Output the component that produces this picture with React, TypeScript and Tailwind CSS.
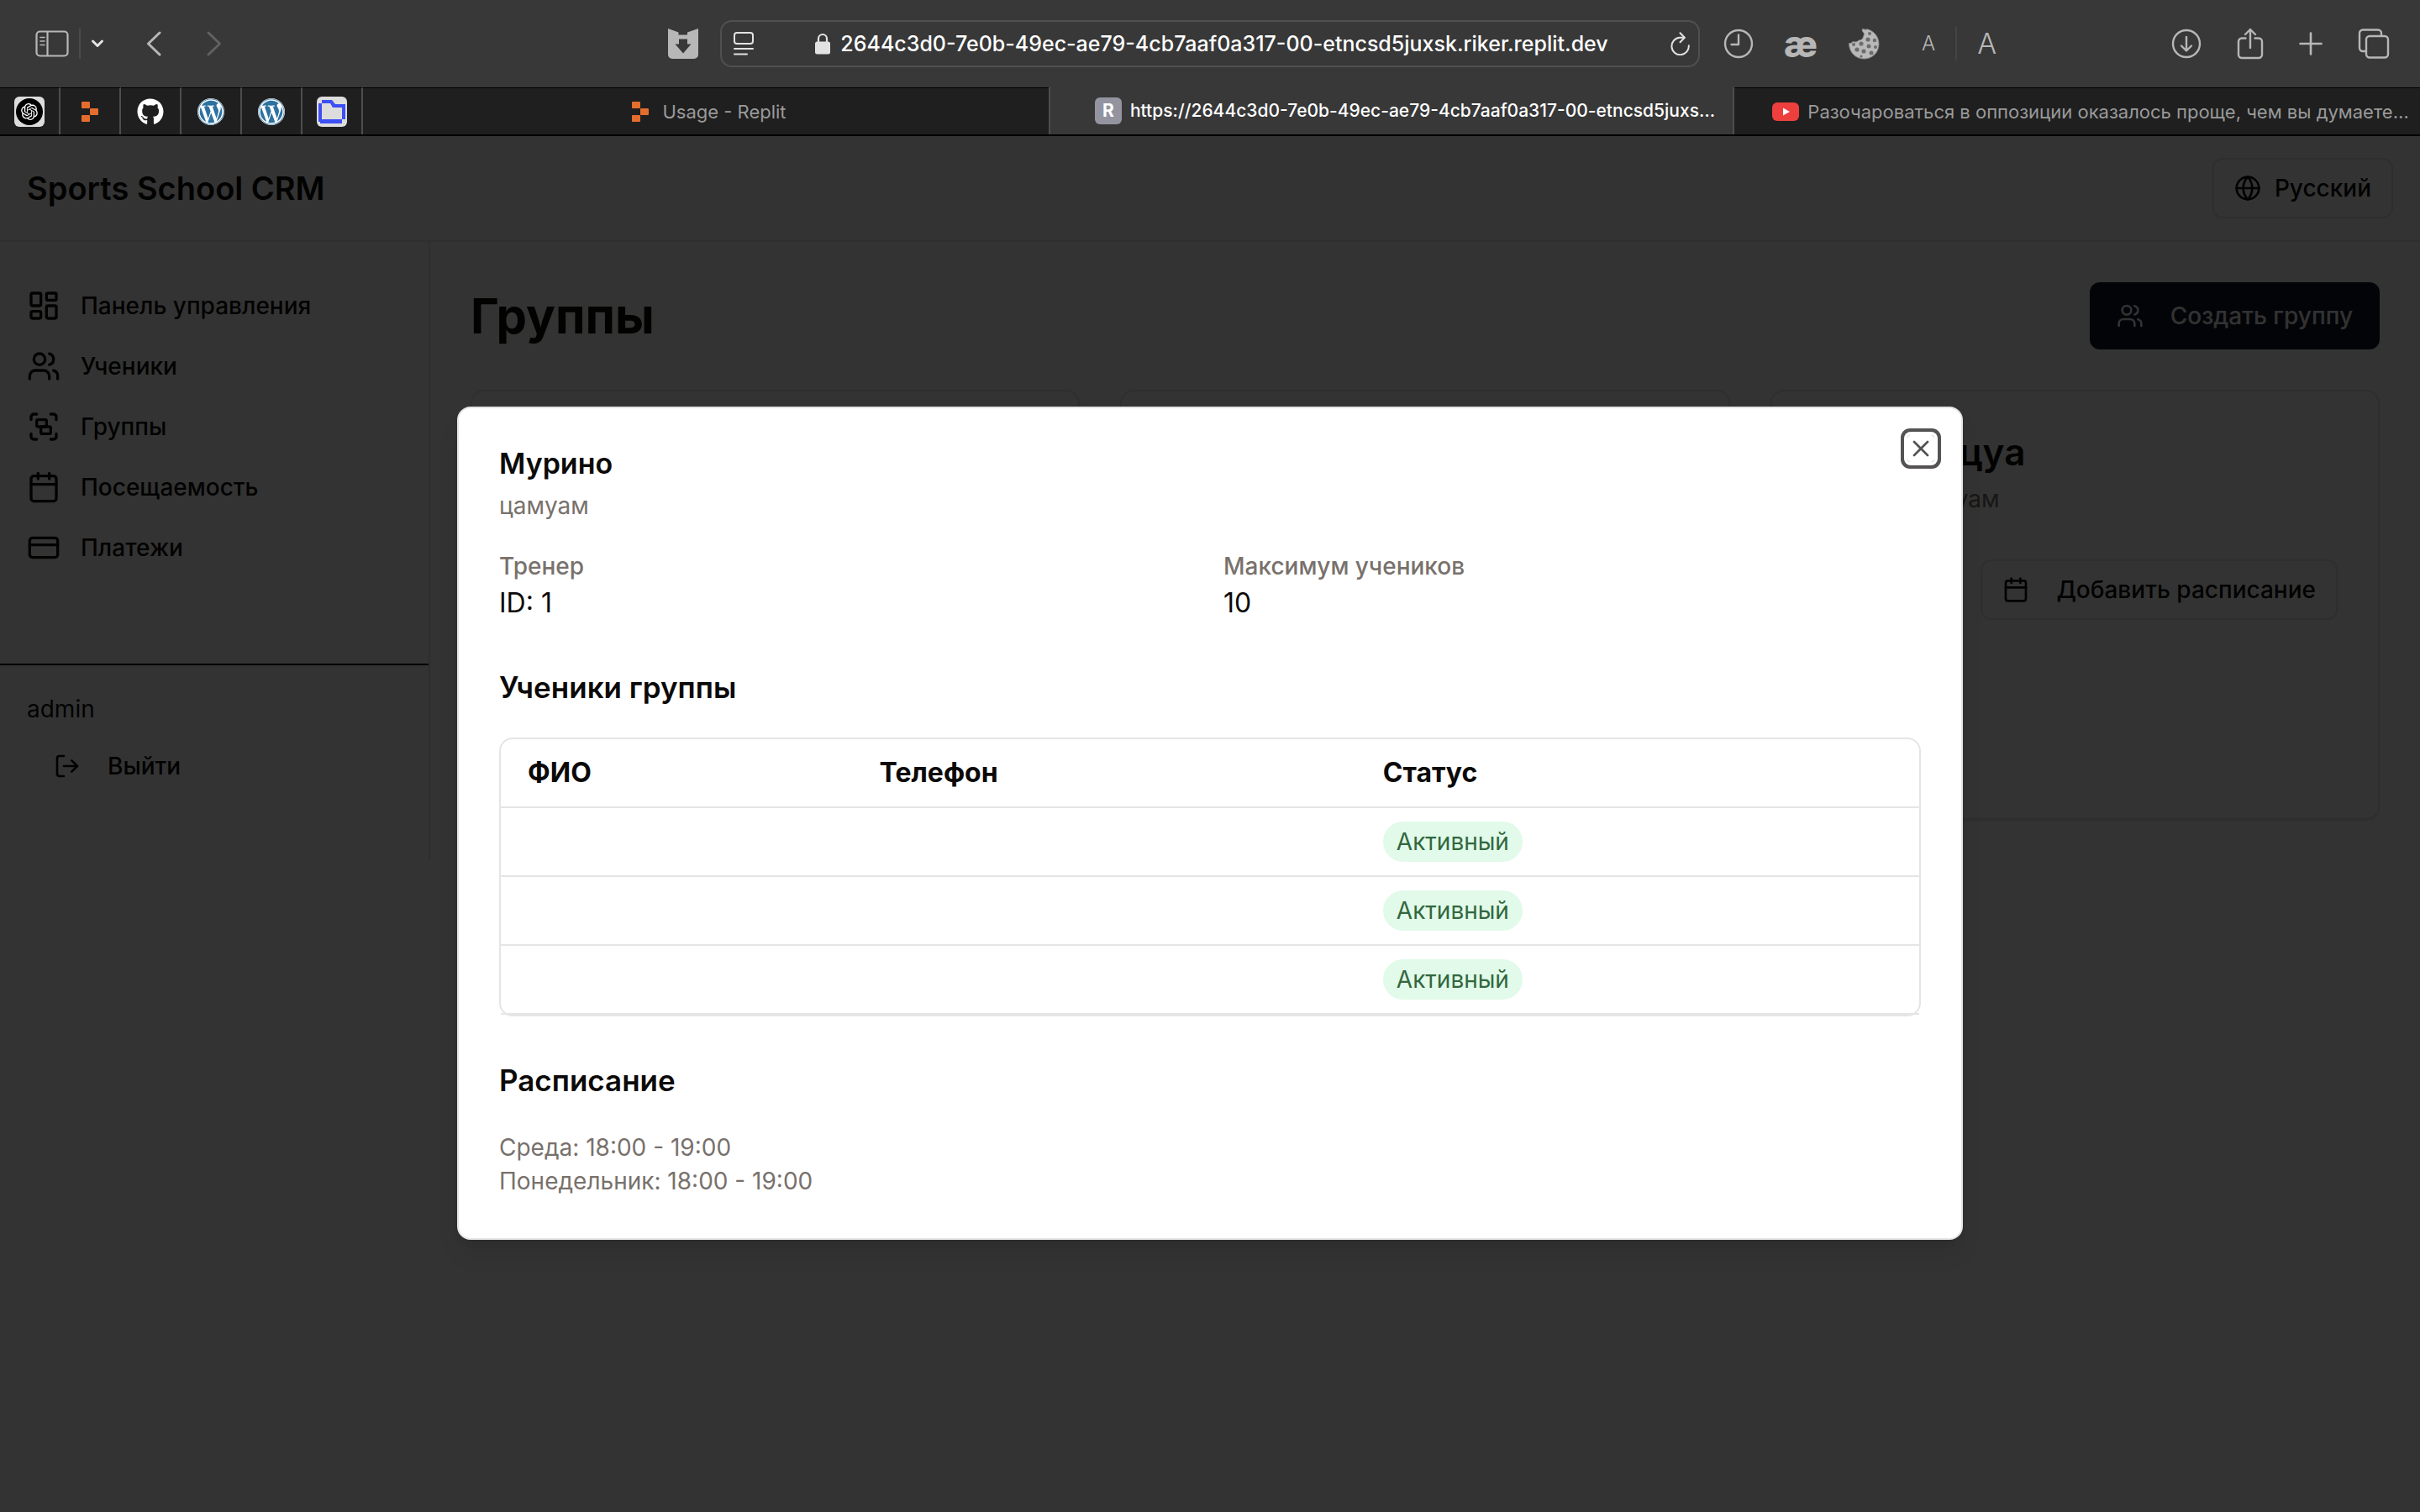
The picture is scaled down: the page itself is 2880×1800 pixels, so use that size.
import type { ComponentType, ReactNode } from 'react';
import { Calendar, CreditCard, Globe, Group, LayoutDashboard, LogOut, Users, X } from 'lucide-react';
import { FaGithub, FaWordpress } from 'react-icons/fa';
import { RiOpenaiFill } from 'react-icons/ri';

/* ---------- browser chrome icons ---------- */

function SidebarIcon() {
  return (
    <svg className="h-8 w-10" viewBox="0 0 40 32" fill="none" stroke="currentColor" strokeWidth="2.2">
      <rect x="1.5" y="1.5" width="37" height="29" rx="4" />
      <path d="M14.5 1.5v29" />
      <path d="M6 8.5h5M6 13h5M6 17.5h5" strokeWidth="1.6" strokeLinecap="round" />
    </svg>
  );
}

function Chevron({ d, className }: { d: string; className: string }) {
  return (
    <svg className={className} viewBox="0 0 18 32" fill="none" stroke="currentColor" strokeWidth="3" strokeLinecap="round" strokeLinejoin="round">
      <path d={d} />
    </svg>
  );
}

function ShieldIcon() {
  return (
    <svg className="size-9" viewBox="0 0 36 36" fill="currentColor" fillRule="evenodd">
      <path d="M0 0 12.500 4.500V7.500h10.500V4.500L36 0V31a5 5 0 0 1-5 5H5a5 5 0 0 1-5-5ZM13 12.500v6H8.500L18 29.500l9.500-11H23v-6Z" />
    </svg>
  );
}

function ReaderIcon() {
  return (
    <svg className="h-7 w-6" viewBox="0 0 24 28" fill="none" stroke="currentColor" strokeWidth="2" strokeLinecap="round">
      <rect x="1" y="1" width="22" height="13" rx="3" />
      <path d="M1 20h22M1 26.500h15" />
    </svg>
  );
}

function LockIcon() {
  return (
    <svg className="h-[26px] w-[18px]" viewBox="0 0 18 26" fill="none">
      <path d="M4 12V7a5 5 0 0 1 10 0v5" stroke="currentColor" strokeWidth="2.200" />
      <rect x="0" y="10.500" width="18" height="15" rx="2.500" fill="currentColor" />
    </svg>
  );
}

function ReloadIcon() {
  return (
    <svg className="h-7 w-6" viewBox="0 0 24 28" fill="none" stroke="currentColor" strokeWidth="2" strokeLinecap="round" strokeLinejoin="round">
      <path d="M17.500 6.800H12a10.200 10.200 0 1 0 10.800 9.500" />
      <path d="M12.500 1.200l5.300 5.500-5.300 5.600" />
    </svg>
  );
}

function ClockIcon() {
  return (
    <svg className="size-9" viewBox="0 0 36 36" fill="none" stroke="currentColor" strokeWidth="2.400" strokeLinecap="round" strokeLinejoin="round">
      <circle cx="18" cy="18" r="16" />
      <path d="M18 7.500V19H9.500" />
    </svg>
  );
}

function CookieIcon() {
  return (
    <svg className="h-[38px] w-[38px]" viewBox="0 0 38 38">
      <path
        d="M17.500 1.500c2 .500 4 1 6 .300C31 4 37 10.500 37 19.500 37 29.500 29 37 19.500 37 9 37 1.500 29 1.500 18.500c2 .500 3.500-.500 4.500-2 3 1 5.500.500 7-1.500 3 0 5-1.500 5.500-4.500 1.500-2 1.200-4.200-.5-5.500-.8-1-1-2.300-.5-3.500Z"
        fill="#b9b9b9"
        stroke="#8a8a8a"
        strokeWidth="1"
      />
      <g fill="#6d6d6d">
        <circle cx="26" cy="7" r="2" />
        <circle cx="24" cy="14" r="2.600" />
        <circle cx="32" cy="15" r="2.300" />
        <circle cx="16" cy="19" r="2.600" />
        <circle cx="7" cy="20" r="2" />
        <circle cx="25" cy="22" r="2.500" />
        <circle cx="33" cy="23" r="2" />
        <circle cx="11" cy="26" r="2.600" />
        <circle cx="19" cy="28" r="2.600" />
        <circle cx="28" cy="30" r="2.500" />
        <circle cx="16" cy="34" r="1.600" />
      </g>
    </svg>
  );
}

function DownloadIcon() {
  return (
    <svg className="size-9" viewBox="0 0 36 36" fill="none" stroke="currentColor" strokeWidth="2.400" strokeLinecap="round" strokeLinejoin="round">
      <circle cx="18" cy="18" r="16" />
      <path d="M18 10v16M12 20.500l6 6 6-6" />
    </svg>
  );
}

function ShareIcon() {
  return (
    <svg className="h-[38px] w-8" viewBox="0 0 32 38" fill="none" stroke="currentColor" strokeWidth="2.400" strokeLinecap="round" strokeLinejoin="round">
      <path d="M10.500 12.500H6a4 4 0 0 0-4 4V32a4 4 0 0 0 4 4h20a4 4 0 0 0 4-4V16.500a4 4 0 0 0-4-4h-4.500" />
      <path d="M16 24V2M10 8l6-6 6 6" />
    </svg>
  );
}

function PlusIcon() {
  return (
    <svg className="size-7" viewBox="0 0 28 28" stroke="currentColor" strokeWidth="2.600" strokeLinecap="round">
      <path d="M14 1.500v25M1.500 14h25" />
    </svg>
  );
}

function TabsIcon() {
  return (
    <svg className="h-9 w-[38px]" viewBox="0 0 38 36" fill="none" stroke="currentColor" strokeWidth="2.400" strokeLinejoin="round">
      <rect x="10" y="9" width="26" height="25.500" rx="4" />
      <path d="M10 27H6a4 4 0 0 1-4-4V5.500a4 4 0 0 1 4-4h18a4 4 0 0 1 4 4V9" />
    </svg>
  );
}

function ReplitMark() {
  return (
    <svg className="h-6 w-5 shrink-0" viewBox="0 0 20 24" fill="#e46d2e">
      <rect x="0" y="0" width="10" height="8" rx="1" />
      <rect x="10" y="8" width="10" height="8" rx="1" />
      <rect x="0" y="16" width="10" height="8" rx="1" />
    </svg>
  );
}

function FolderMark() {
  return (
    <svg className="size-9" viewBox="0 0 36 36">
      <rect width="36" height="36" rx="6" fill="#dddddd" />
      <path
        d="M6 4h12l4 5h12v18h-4v5H4v-2H2V8h4V4ZM6 8v19h24V13H19l-3-5H6Z"
        fill="#3d50f5"
        fillRule="evenodd"
      />
    </svg>
  );
}

function YoutubeMark() {
  return (
    <svg className="h-[22px] w-8 shrink-0" viewBox="0 0 32 22">
      <rect width="32" height="22" rx="6" fill="#ec3f3e" />
      <path d="M13 6.500v9l8-4.500Z" fill="#fff" />
    </svg>
  );
}

function WordpressMark() {
  return (
    <span className="flex size-8 items-center justify-center rounded-full bg-white">
      <FaWordpress className="size-8 text-[#2d72a0]" />
    </span>
  );
}

/* ---------- browser chrome ---------- */

function ToolButton({ label, children }: { label: string; children: ReactNode }) {
  return (
    <button type="button" aria-label={label} className="flex shrink-0 items-center justify-center">
      {children}
    </button>
  );
}

function Toolbar() {
  return (
    <div className="grid h-[104px] grid-cols-[1fr_1166px_1fr] items-center bg-[#383838] text-[#b7b7b7]">
      <div className="flex items-center pr-[26px] pl-[42px]">
        <ToolButton label="Sidebar">
          <SidebarIcon />
        </ToolButton>
        <span className="mx-3 h-9 w-0.5 bg-[#4b4b4b]" />
        <button type="button" aria-label="Tab groups" className="text-[#e4e4e4]">
          <svg className="h-3 w-4" viewBox="0 0 16 12" fill="none" stroke="currentColor" strokeWidth="3" strokeLinecap="round" strokeLinejoin="round">
            <path d="M2.500 3 8 8.500 13.500 3" />
          </svg>
        </button>
        <span className="w-[50px]" />
        <ToolButton label="Back">
          <Chevron className="h-8 w-[18px]" d="M16 3 2.500 16 16 29" />
        </ToolButton>
        <span className="w-[54px]" />
        <span className="text-[#606060]">
          <ToolButton label="Forward">
            <Chevron className="h-8 w-[18px]" d="M2 3 15.500 16 2 29" />
          </ToolButton>
        </span>
        <span className="flex-1" />
        <ToolButton label="Downloader">
          <ShieldIcon />
        </ToolButton>
      </div>

      <div className="flex h-14 items-center rounded-[14px] border-2 border-[#505050] pr-2.5 pl-3.5 text-[#e2e2e2]">
        <ToolButton label="Reader">
          <ReaderIcon />
        </ToolButton>
        <div className="flex flex-1 items-center justify-center gap-3">
          <LockIcon />
          <span className="text-[25px] leading-9 font-medium whitespace-nowrap text-white">
            2644c3d0-7e0b-49ec-ae79-4cb7aaf0a317-00-etncsd5juxsk.riker.replit.dev
          </span>
        </div>
        <ToolButton label="Reload">
          <ReloadIcon />
        </ToolButton>
      </div>

      <div className="flex items-center pr-9 pl-7">
        <div className="flex items-center gap-9">
          <ToolButton label="History">
            <ClockIcon />
          </ToolButton>
          <button type="button" className="w-10 text-center text-[44px] leading-9 font-extrabold">
            æ
          </button>
          <ToolButton label="Cookies">
            <CookieIcon />
          </ToolButton>
        </div>
        <div className="ml-[50px] flex items-center">
          <button type="button" className="text-[24px] leading-9 font-light">
            A
          </button>
          <span className="mx-6 h-10 w-0.5 bg-[#444444]" />
          <button type="button" className="text-[34px] leading-9 font-light">
            A
          </button>
        </div>
        <div className="ml-auto flex items-center gap-[42px]">
          <ToolButton label="Downloads">
            <DownloadIcon />
          </ToolButton>
          <ToolButton label="Share">
            <ShareIcon />
          </ToolButton>
          <ToolButton label="New tab">
            <PlusIcon />
          </ToolButton>
          <ToolButton label="Tab overview">
            <TabsIcon />
          </ToolButton>
        </div>
      </div>
    </div>
  );
}

function PinnedTab({ label, children }: { label: string; children: ReactNode }) {
  return (
    <button
      type="button"
      aria-label={label}
      className="flex w-[72px] shrink-0 items-center justify-center border-t border-r-2 border-t-black border-r-[#4d4d4d]"
    >
      {children}
    </button>
  );
}

function TabBar() {
  return (
    <div className="flex h-[58px] border-b-2 border-black bg-[#1f1f1f] text-[22px] leading-7 text-[#9a9a9a]">
      <PinnedTab label="ChatGPT">
        <span className="flex size-9 items-center justify-center rounded-md bg-[#dddddd]">
          <span className="flex size-8 items-center justify-center rounded-full bg-black text-white">
            <RiOpenaiFill className="size-6" />
          </span>
        </span>
      </PinnedTab>
      <PinnedTab label="Replit">
        <ReplitMark />
      </PinnedTab>
      <PinnedTab label="GitHub">
        <FaGithub className="size-8 text-white" />
      </PinnedTab>
      <PinnedTab label="WordPress">
        <WordpressMark />
      </PinnedTab>
      <PinnedTab label="WordPress admin">
        <WordpressMark />
      </PinnedTab>
      <PinnedTab label="Files">
        <FolderMark />
      </PinnedTab>
      <div className="grid flex-1 grid-cols-3">
        <button type="button" className="flex min-w-0 items-center justify-center gap-4 border-t border-black pl-2">
          <ReplitMark />
          <span className="truncate">Usage - Replit</span>
        </button>
        <button
          type="button"
          className="flex min-w-0 items-center justify-center gap-2.5 border-x-2 border-[#4d4d4d] bg-[#383838] pl-8 text-[21px] font-medium text-white"
        >
          <span className="flex size-8 shrink-0 items-center justify-center rounded-md bg-[#9494a1] font-bold">R</span>
          <span className="truncate">https://2644c3d0-7e0b-49ec-ae79-4cb7aaf0a317-00-etncsd5juxs…</span>
        </button>
        <button type="button" className="flex min-w-0 items-center justify-center gap-2.5 border-t border-black pl-8">
          <YoutubeMark />
          <span className="truncate">Разочароваться в оппозиции оказалось проще, чем вы думаете…</span>
        </button>
      </div>
    </div>
  );
}

/* ---------- application ---------- */

type Icon = ComponentType<{ className?: string; strokeWidth?: number }>;

const navItems: { label: string; icon: Icon }[] = [
  { label: 'Панель управления', icon: LayoutDashboard },
  { label: 'Ученики', icon: Users },
  { label: 'Группы', icon: Group },
  { label: 'Посещаемость', icon: Calendar },
  { label: 'Платежи', icon: CreditCard },
];

function AppHeader() {
  return (
    <header className="flex h-[126px] items-center justify-between border-b-2 border-[#e5e5e5] px-8">
      <h1 className="text-[38px] leading-14 font-semibold">Sports School CRM</h1>
      <button type="button" className="flex h-[72px] items-center gap-4 rounded-xl border-2 border-[#e5e5e5] px-6 font-medium">
        <Globe className="size-8" />
        Русский
      </button>
    </header>
  );
}

function Sidebar() {
  return (
    <aside className="flex w-[512px] shrink-0 flex-col self-start border-r-2 border-[#e5e5e5] pb-20">
      <nav className="flex flex-col pt-10 pb-[102px]">
        {navItems.map(({ label, icon: ItemIcon }) => (
          <a key={label} href="#" className="flex h-[72px] items-center gap-6 px-8 font-medium">
            <ItemIcon className="size-10" />
            {label}
          </a>
        ))}
      </nav>
      <div className="flex flex-col items-start gap-4 border-t-2 border-black px-8 pt-8">
        <p>admin</p>
        <button type="button" className="flex h-16 items-center gap-8 px-8 font-medium">
          <LogOut className="size-8" />
          Выйти
        </button>
      </div>
    </aside>
  );
}

function GroupCard({ children }: { children?: ReactNode }) {
  return <article className="h-[512px] rounded-2xl border-2 border-[#e5e5e5] p-12 shadow-sm">{children}</article>;
}

function Groups() {
  return (
    <main className="min-w-0 flex-1 p-12">
      <div className="flex h-20 items-center justify-between">
        <h2 className="text-[58px] leading-18 font-bold">Группы</h2>
        <button type="button" className="flex h-20 items-center gap-8 rounded-xl bg-[#0f172a] px-8 font-medium text-[#fafaf9]">
          <Users className="size-8" />
          Создать группу
        </button>
      </div>
      <div className="mt-12 grid grid-cols-3 gap-12">
        <GroupCard />
        <GroupCard />
        <GroupCard>
          <h3 className="text-[44px] leading-12 font-semibold">Муриноцуа</h3>
          <p className="mt-3 text-[#78716c]">Мурино цамуам</p>
          <div className="mt-[52px] flex justify-end">
            <button type="button" className="flex h-[72px] items-center gap-8 rounded-xl border-2 border-[#e5e5e5] px-6 font-medium whitespace-nowrap">
              <Calendar className="size-8" />
              Добавить расписание
            </button>
          </div>
        </GroupCard>
      </div>
    </main>
  );
}

function GroupDialog() {
  return (
    <div
      role="dialog"
      aria-modal="true"
      aria-labelledby="group-title"
      className="relative w-full max-w-[1792px] rounded-2xl border-2 border-[#e5e5e5] bg-white p-12 shadow-[0_20px_30px_-6px_rgba(0,0,0,0.1),0_8px_12px_-8px_rgba(0,0,0,0.1)]"
    >
      <h2 id="group-title" className="text-[34px] leading-9 font-semibold">
        Мурино
      </h2>
      <p className="mt-3 text-[#78716c]">цамуам</p>

      <dl className="mt-8 grid grid-cols-2 gap-8">
        <div>
          <dt className="font-medium text-[#78716c]">Тренер</dt>
          <dd className="text-[32px] leading-12">ID: 1</dd>
        </div>
        <div>
          <dt className="font-medium text-[#78716c]">Максимум учеников</dt>
          <dd className="text-[32px] leading-12">10</dd>
        </div>
      </dl>

      <h3 className="mt-12 text-[35px] leading-14 font-semibold">Ученики группы</h3>
      <div className="mt-8 rounded-2xl border-2 border-[#e5e5e5]">
        <table className="w-full table-fixed text-left">
          <thead>
            <tr className="h-[81px] border-b-2 border-[#e5e5e5] text-[32px]">
              <th className="w-[24.8%] px-8 font-bold">ФИО</th>
              <th className="w-[35.5%] px-8 font-bold">Телефон</th>
              <th className="px-8 font-bold">Статус</th>
            </tr>
          </thead>
          <tbody>
            {[1, 2, 3].map((id) => (
              <tr key={id} className="h-[82px] border-b-2 border-[#e5e5e5]">
                <td />
                <td />
                <td className="px-8 align-middle">
                  <span className="flex w-fit rounded-full bg-[#e1fae9] px-4 py-2 leading-8 text-[#33673f]">Активный</span>
                </td>
              </tr>
            ))}
          </tbody>
        </table>
      </div>

      <h3 className="mt-12 text-[35px] leading-14 font-semibold">Расписание</h3>
      <ul className="mt-8 text-[#78716c]">
        <li>Среда: 18:00 - 19:00</li>
        <li>Понедельник: 18:00 - 19:00</li>
      </ul>

      <button
        type="button"
        aria-label="Закрыть"
        className="absolute top-8 right-8 rounded-sm opacity-70 ring-4 ring-[#0c0a09] ring-offset-4 ring-offset-white"
      >
        <X className="size-8" />
      </button>
    </div>
  );
}

export default function App() {
  return (
    <div className="flex min-h-screen flex-col bg-white font-['Inter','Noto_Sans',sans-serif]">
      <Toolbar />
      <TabBar />
      <div className="relative flex flex-1 flex-col text-[28px] leading-10 text-[#0c0a09]">
        <AppHeader />
        <div className="flex flex-1">
          <Sidebar />
          <Groups />
        </div>
        <div className="absolute inset-0 flex items-center justify-center bg-black/80 pb-0.5">
          <GroupDialog />
        </div>
      </div>
    </div>
  );
}
